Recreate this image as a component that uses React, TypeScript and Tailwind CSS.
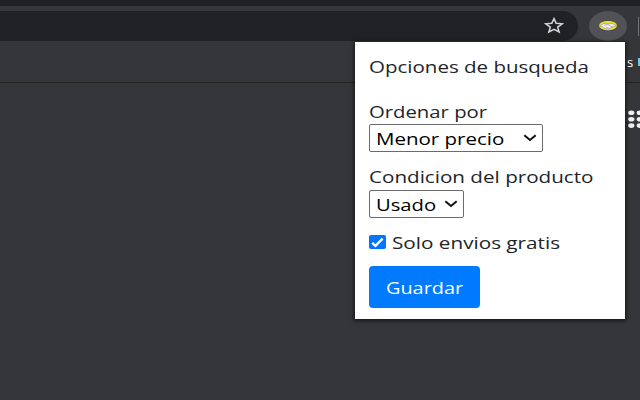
import React, { useLayoutEffect, useRef, useState } from "react";

// A single line of text, stretched horizontally to the given width.
function Line({ text, width, className = "" }: { text: string; width: number; className?: string }) {
  const ref = useRef<HTMLSpanElement>(null);
  const [scale, setScale] = useState(1);
  useLayoutEffect(() => {
    if (ref.current) setScale(width / ref.current.offsetWidth);
  }, [width]);
  return (
    <span className={`block h-6 leading-6 ${className}`} style={{ width }}>
      <span ref={ref} className="inline-block origin-left whitespace-nowrap" style={{ transform: `scaleX(${scale})` }}>
        {text}
      </span>
    </span>
  );
}

function Chevron() {
  return (
    <svg width="14" height="8" viewBox="0 0 14 8" fill="none" stroke="#101010" strokeWidth="2">
      <path d="M1.3 1.3 L7 6 L12.7 1.3" />
    </svg>
  );
}

function Select({ text, width, className }: { text: string; width: number; className: string }) {
  return (
    <button
      className={`flex h-7 items-center justify-between rounded-[2px] border border-[#6b6b6b] bg-white pl-1.5 pr-[5px] text-black ${className}`}
    >
      <Line text={text} width={width} className="relative top-px text-left" />
      <Chevron />
    </button>
  );
}

function Popup() {
  return (
    <section className="absolute left-[355px] top-[42px] flex h-[277px] w-[270px] flex-col items-start bg-white pl-3.5 pt-[13px] text-[16.5px] text-[#212529] shadow-[0_1px_4px_1px_rgba(0,0,0,0.6)]">
      <Line text="Opciones de busqueda" width={220} />
      <div className="mt-[21px]">
        <Line text="Ordenar por" width={118} />
        <Select text="Menor precio" width={128} className="w-[174px]" />
      </div>
      <div className="mt-[13px]">
        <Line text="Condicion del producto" width={225} />
        <Select text="Usado" width={60} className="mt-px w-[95px]" />
      </div>
      <label className="mt-[13px] flex items-center">
        <span className="mb-0.5 mr-1.5 flex h-[14px] w-[17px] items-center justify-center rounded-[2px] bg-[#0075ff]">
          <svg width="13" height="11" viewBox="0 0 13 11" fill="none" stroke="white" strokeWidth="2.4">
            <path d="M1.2 5.8 L4.5 8.8 L11.6 1.6" />
          </svg>
        </span>
        <Line text="Solo envios gratis" width={168} />
      </label>
      <button className="mt-[11px] flex h-[42px] w-[111px] items-center rounded-[4px] bg-[#007bff] pl-[17px] text-white">
        <Line text="Guardar" width={77} className="relative top-px text-left" />
      </button>
    </section>
  );
}

export default function App() {
  return (
    <main className="relative h-[400px] w-[640px] overflow-hidden bg-[#35363a] font-['Open_Sans','Noto_Sans',sans-serif]">
      <div className="h-1.5 bg-[#202124]" />
      <header className="flex h-[35px] items-center overflow-hidden pt-px">
        <div className="mt-[3px] flex h-[30px] w-[578px] items-center justify-end rounded-r-[17px] bg-[#202124] pr-3.5">
          <svg width="20" height="17" viewBox="0 0 20 17" fill="none" stroke="#d2d3d5" strokeWidth="1.6">
            <path d="M10 1.7 L12.2 6.3 L18.2 6.8 L13.7 10.1 L15.1 15 L10 12.4 L4.9 15 L6.3 10.1 L1.8 6.8 L7.8 6.3 Z" />
          </svg>
        </div>
        <div className="ml-[11px] mt-[3px] flex h-[30px] w-[38px] shrink-0 items-center justify-center rounded-[50%] bg-[#515255]">
          <svg width="20" height="12" viewBox="0 0 20 12">
            <ellipse cx="10" cy="6.2" rx="9" ry="5" fill="#302e88" />
            <ellipse cx="10" cy="5.7" rx="9" ry="4.8" fill="#f2e51b" />
            <path d="M1.5 5.8 L6 3.5 L10 4 L14 3.5 L18.5 5.8 L14 7 L11 9 L8 8.8 L5 7Z" fill="#f5f5f7" stroke="#777bb0" strokeWidth=".6" />
            <path d="M6 5.5 L10 4.7 L14 6.8 M8 7.2 L11 8" fill="none" stroke="#8589b5" strokeWidth=".6" />
          </svg>
        </div>
        <div className="ml-[11px] mt-1 h-[19px] w-px bg-[#717276]" />
      </header>
      <div className="flex h-[42px] items-center justify-end overflow-hidden border-b border-[#242422]">
        <span className="flex w-[13px] shrink-0 items-center justify-between text-[13px] leading-5 text-white">
          s <span className="h-2 w-0.5 bg-[#65c9eb]" />
        </span>
      </div>
      <div className="flex justify-end pt-[27px]">
        <svg width="12" height="18" viewBox="0 0 12 18" fill="#f0f0f0">
          {[2.8, 9.2, 15.6].map((y) => (
            <g key={y}>
              <ellipse cx="3.3" cy={y} rx="3.1" ry="2.3" />
              <ellipse cx="11.8" cy={y} rx="3.1" ry="2.3" />
            </g>
          ))}
        </svg>
      </div>
      <Popup />
    </main>
  );
}
